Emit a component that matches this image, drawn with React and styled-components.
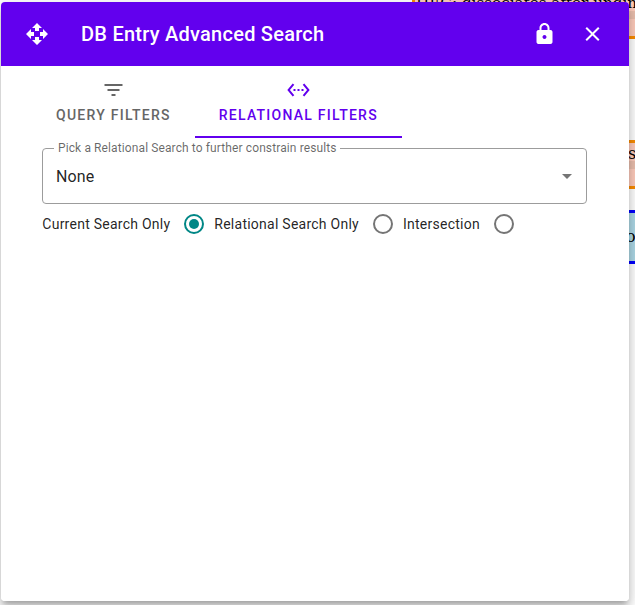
import React, { useState } from "react";
import styled, { createGlobalStyle } from "styled-components";

const Global = createGlobalStyle`
  body { margin: 0; background: #fff; font-family: Roboto, sans-serif; overflow: hidden; }
  *, *::before, *::after { box-sizing: border-box; }
`;

const Stage = styled.div`
  position: relative;
  width: 635px;
  height: 605px;
  padding: 2px 6px 4px 1px;
  overflow: hidden;
`;

const Note = styled.div`
  position: absolute;
  left: ${(p) => p.$x}px;
  top: ${(p) => p.$y}px;
  width: 400px;
  height: ${(p) => p.$h}px;
  padding-top: ${(p) => p.$pad}px;
  padding-left: ${(p) => p.$indent || 0}px;
  border: 3px solid ${(p) => p.$line};
  background: ${(p) => p.$fill};
  color: #000;
  font-family: "DejaVu Serif", serif;
  font-size: ${(p) => p.$size || 16}px;
  line-height: 20px;
  white-space: nowrap;
`;

const Shade = styled.div`
  position: absolute;
  left: 0;
  right: 0;
  top: ${(p) => p.$y}px;
  height: 8px;
  background: #ebbfae;
`;

const Dialog = styled.section`
  position: relative;
  display: flex;
  flex-direction: column;
  height: 599px;
  border-radius: 4px;
  background: #fff;
  overflow: hidden;
`;

const Shadow = styled.div`
  position: relative;
  border-radius: 4px;
  box-shadow: 0 5px 5px -3px rgba(0, 0, 0, 0.2), 0 8px 10px 1px rgba(0, 0, 0, 0.14),
    0 3px 14px 2px rgba(0, 0, 0, 0.12);
`;

const TopBar = styled.header`
  display: flex;
  align-items: center;
  flex: none;
  height: 64px;
  padding: 0 12px;
  background: #6200ee;
  color: #fff;
`;

const IconButton = styled.button`
  display: grid;
  place-items: center;
  width: 48px;
  height: 48px;
  padding: 0;
  border: 0;
  background: none;
  color: inherit;
`;

const Title = styled.h1`
  flex: 1;
  margin: 0;
  padding-left: 20px;
  font-size: 20px;
  font-weight: 500;
  line-height: 32px;
  letter-spacing: 0.25px;
`;

const Glyph = styled.svg`
  display: block;
  width: 24px;
  height: 24px;
  fill: currentColor;
`;

const TabBar = styled.nav`
  display: flex;
  height: 72px;
  padding-left: 31px;
`;

const Tab = styled.button`
  display: flex;
  flex-direction: column;
  align-items: center;
  gap: 3px;
  height: 72px;
  padding: 12px 24px 0;
  border: 0;
  border-bottom: 2px solid ${(p) => (p.$active ? "#6200ee" : "transparent")};
  background: none;
  color: ${(p) => (p.$active ? "#6200ee" : "#666")};
  font: 500 14px/20px Roboto, sans-serif;
  letter-spacing: 1.25px;
  white-space: nowrap;
`;

const TabGlyph = styled(Glyph)`
  margin-left: 1px;
`;

const Panel = styled.div`
  padding: 10px 42px 0 41px;
`;

const Select = styled.div`
  position: relative;
  display: flex;
  align-items: center;
  justify-content: space-between;
  height: 56px;
  padding: 0 7px 0 13px;
  border: 1px solid #9c9c9c;
  border-radius: 4px;
  color: rgba(0, 0, 0, 0.87);
  font-size: 16px;
  letter-spacing: 0.15px;
`;

const FloatingLabel = styled.label`
  position: absolute;
  left: 11px;
  top: -9px;
  width: 286px;
  padding-left: 4px;
  background: #fff;
  color: rgba(0, 0, 0, 0.6);
  font-size: 12px;
  line-height: 16px;
  letter-spacing: 0.11px;
  white-space: nowrap;
`;

const Arrow = styled(Glyph)`
  color: #757575;
`;

const Choices = styled.div`
  display: flex;
  align-items: center;
  height: 40px;
  padding-left: 0.3px;
`;

const Choice = styled.label`
  display: flex;
  align-items: center;
  color: rgba(0, 0, 0, 0.87);
  font-size: 14px;
  line-height: 20px;
  letter-spacing: 0.25px;
  white-space: nowrap;
`;

const Radio = styled.input`
  appearance: none;
  display: grid;
  place-items: center;
  width: 20px;
  height: 20px;
  margin: 0 10px 0 14px;
  border: 2px solid ${(p) => (p.checked ? "#018786" : "#757575")};
  border-radius: 50%;

  &:checked::before {
    content: "";
    width: 10px;
    height: 10px;
    border-radius: 50%;
    background: #018786;
  }
`;

const paths = {
  move: "M10 9h4V6h3l-5-5-5 5h3v3zm-1 1H6V7l-5 5 5 5v-3h3v-4zm14 2l-5-5v3h-3v4h3v3l5-5zm-9 3h-4v3H7l5 5 5-5h-3v-3z",
  lock: "M18 8h-1V6c0-2.76-2.24-5-5-5S7 3.24 7 6v2H6c-1.1 0-2 .9-2 2v10c0 1.1.9 2 2 2h12c1.1 0 2-.9 2-2V10c0-1.1-.9-2-2-2zm-6 9c-1.1 0-2-.9-2-2s.9-2 2-2 2 .9 2 2-.9 2-2 2zM9 8V6c0-1.66 1.34-3 3-3s3 1.34 3 3v2H9z",
  close: "M19 6.41L17.59 5 12 10.59 6.41 5 5 6.41 10.59 12 5 17.59 6.41 19 12 13.41 17.59 19 19 17.59 13.41 12z",
  filter: "M10 18h4v-2h-4v2zM3 6v2h18V6H3zm3 7h12v-2H6v2z",
  relation: "M7.77 6.76L6.23 5.48.82 12l5.41 6.52 1.54-1.28L3.42 12l4.35-5.24zM7 13h2v-2H7v2zm10-2h-2v2h2v-2zm-6 2h2v-2h-2v2zm6.77-7.52l-1.54 1.28L20.58 12l-4.35 5.24 1.54 1.28L23.18 12l-5.41-6.52z",
  down: "M7 10l5 5 5-5z",
};

function Icon({ name, nudge = 0, as: Component = Glyph }) {
  return (
    <Component viewBox={`${nudge} 0 24 24`} aria-hidden="true">
      <path d={paths[name]} />
    </Component>
  );
}

const options = ["Current Search Only", "Relational Search Only", "Intersection"];

export default function App() {
  const [scope, setScope] = useState(options[0]);
  const [tab, setTab] = useState("relation");

  return (
    <Stage>
      <Global />
      <Note $x={412} $y={-30} $h={69} $pad={20} $size={15.2} $indent={1} $line="#fb8c00" $fill="#ffccbc">
        HEC: dissociates after undin
        <Shade $y={38} />
      </Note>
      <Note $x={400} $y={140} $h={49} $pad={1} $indent={225} $line="#fb8c00" $fill="#ffccbc">
        s
        <Shade $y={18} />
      </Note>
      <Note $x={400} $y={210} $h={54} $pad={14} $indent={223} $line="#00f" $fill="#add8e6">
        o
      </Note>
      <Shadow>
        <Dialog>
          <TopBar>
            <IconButton aria-label="Move"><Icon name="move" /></IconButton>
            <Title>DB Entry Advanced Search</Title>
            <IconButton aria-label="Lock"><Icon name="lock" nudge={0.5} /></IconButton>
            <IconButton aria-label="Close"><Icon name="close" nudge={0.5} /></IconButton>
          </TopBar>
          <TabBar>
            <Tab $active={tab === "filter"} onClick={() => setTab("filter")}>
              <Icon name="filter" nudge={0.5} as={TabGlyph} />
              QUERY FILTERS
            </Tab>
            <Tab $active={tab === "relation"} onClick={() => setTab("relation")}>
              <Icon name="relation" nudge={0.5} as={TabGlyph} />
              RELATIONAL FILTERS
            </Tab>
          </TabBar>
          <Panel>
            <Select>
              <FloatingLabel>Pick a Relational Search to further constrain results</FloatingLabel>
              None
              <Icon name="down" as={Arrow} />
            </Select>
            <Choices>
              {options.map((option) => (
                <Choice key={option}>
                  {option}
                  <Radio
                    type="radio"
                    name="scope"
                    checked={scope === option}
                    onChange={() => setScope(option)}
                  />
                </Choice>
              ))}
            </Choices>
          </Panel>
        </Dialog>
      </Shadow>
    </Stage>
  );
}
